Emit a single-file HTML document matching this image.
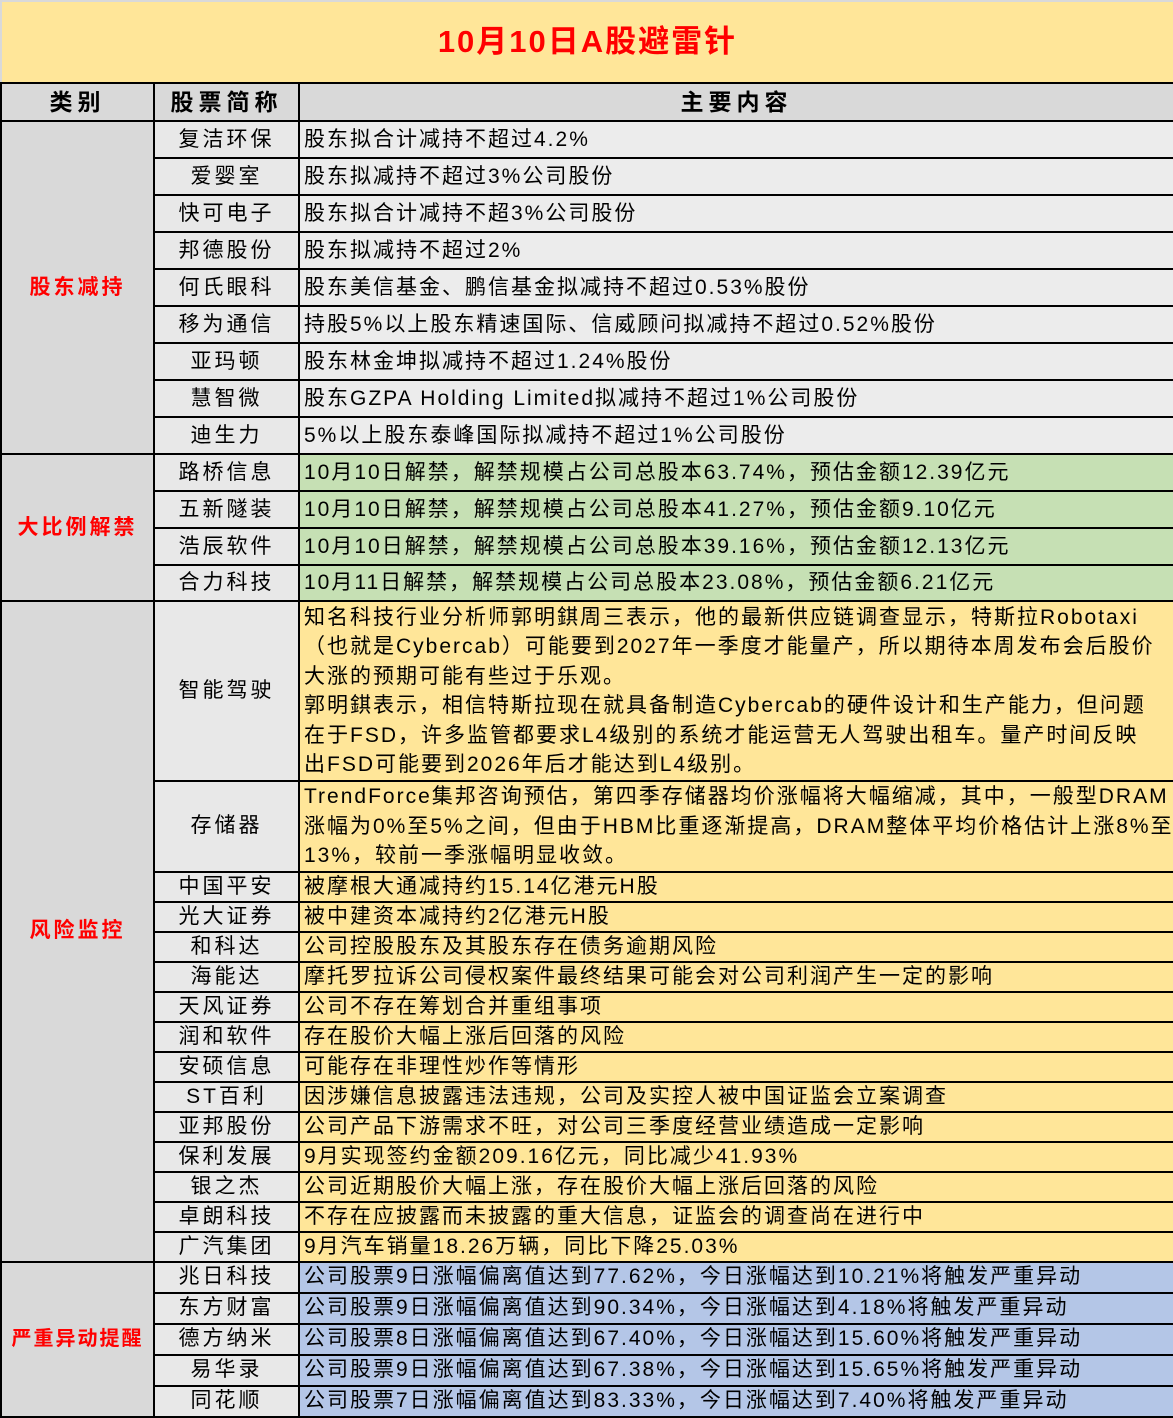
<!DOCTYPE html>
<html><head><meta charset="utf-8"><style>
body{margin:0;width:1173px;height:1416px;overflow:hidden;background:#fff;font-family:"Liberation Sans","Noto Sans CJK SC",sans-serif;}
table{border-collapse:collapse;table-layout:fixed;width:1173px;position:absolute;left:0;top:0;}
td{border:2px solid #000;padding:0;font-size:21px;line-height:24px;color:#000;white-space:nowrap;overflow:hidden;letter-spacing:2px;}
.t{background:#FFE699;color:#f00;font-weight:bold;font-size:31px;line-height:34px;letter-spacing:2px;text-align:center;border-color:#d9d9d9 #d9d9d9 #000 #d9d9d9;}
.h{background:#d9d9d9;font-weight:bold;font-size:23px;text-align:center;letter-spacing:5px;}
.c{background:#d9d9d9;color:#f00;font-weight:bold;font-size:21px;text-align:center;letter-spacing:3px;}
.n{background:#e8e8e8;text-align:center;letter-spacing:3px;}
.g{background:#ececec;padding-left:4px;}
.gr{background:#C6E0B4;padding-left:4px;}
.y{background:#FFE699;padding-left:4px;}
.b{background:#B4C6E7;padding-left:4px;}
.m{line-height:29.5px;vertical-align:middle;}
</style></head><body>
<table>
<colgroup><col style="width:153px"><col style="width:145px"><col style="width:875px"></colgroup>
<tr style="height:82px"><td class="t" colspan="3">10月10日A股避雷针</td></tr>
<tr style="height:38px"><td class="h">类别</td><td class="h">股票简称</td><td class="h">主要内容</td></tr>
<tr style="height:37px"><td class="c" rowspan="9">股东减持</td><td class="n">复洁环保</td><td class="g">股东拟合计减持不超过4.2%</td></tr>
<tr style="height:37px"><td class="n">爱婴室</td><td class="g">股东拟减持不超过3%公司股份</td></tr>
<tr style="height:37px"><td class="n">快可电子</td><td class="g">股东拟合计减持不超3%公司股份</td></tr>
<tr style="height:37px"><td class="n">邦德股份</td><td class="g">股东拟减持不超过2%</td></tr>
<tr style="height:37px"><td class="n">何氏眼科</td><td class="g">股东美信基金、鹏信基金拟减持不超过0.53%股份</td></tr>
<tr style="height:37px"><td class="n">移为通信</td><td class="g">持股5%以上股东精速国际、信威顾问拟减持不超过0.52%股份</td></tr>
<tr style="height:37px"><td class="n">亚玛顿</td><td class="g">股东林金坤拟减持不超过1.24%股份</td></tr>
<tr style="height:37px"><td class="n">慧智微</td><td class="g">股东GZPA Holding Limited拟减持不超过1%公司股份</td></tr>
<tr style="height:37px"><td class="n">迪生力</td><td class="g">5%以上股东泰峰国际拟减持不超过1%公司股份</td></tr>
<tr style="height:37px"><td class="c" rowspan="4">大比例解禁</td><td class="n">路桥信息</td><td class="gr">10月10日解禁，解禁规模占公司总股本63.74%，预估金额12.39亿元</td></tr>
<tr style="height:37px"><td class="n">五新隧装</td><td class="gr">10月10日解禁，解禁规模占公司总股本41.27%，预估金额9.10亿元</td></tr>
<tr style="height:37px"><td class="n">浩辰软件</td><td class="gr">10月10日解禁，解禁规模占公司总股本39.16%，预估金额12.13亿元</td></tr>
<tr style="height:36px"><td class="n">合力科技</td><td class="gr">10月11日解禁，解禁规模占公司总股本23.08%，预估金额6.21亿元</td></tr>
<tr style="height:180px"><td class="c" rowspan="15">风险监控</td><td class="n">智能驾驶</td><td class="y m">知名科技行业分析师郭明錤周三表示，他的最新供应链调查显示，特斯拉Robotaxi<br>（也就是Cybercab）可能要到2027年一季度才能量产，所以期待本周发布会后股价<br>大涨的预期可能有些过于乐观。<br>郭明錤表示，相信特斯拉现在就具备制造Cybercab的硬件设计和生产能力，但问题<br>在于FSD，许多监管都要求L4级别的系统才能运营无人驾驶出租车。量产时间反映<br>出FSD可能要到2026年后才能达到L4级别。</td></tr>
<tr style="height:90px"><td class="n">存储器</td><td class="y m">TrendForce集邦咨询预估，第四季存储器均价涨幅将大幅缩减，其中，一般型DRAM<br>涨幅为0%至5%之间，但由于HBM比重逐渐提高，DRAM整体平均价格估计上涨8%至<br>13%，较前一季涨幅明显收敛。</td></tr>
<tr style="height:30px"><td class="n">中国平安</td><td class="y">被摩根大通减持约15.14亿港元H股</td></tr>
<tr style="height:30px"><td class="n">光大证券</td><td class="y">被中建资本减持约2亿港元H股</td></tr>
<tr style="height:30px"><td class="n">和科达</td><td class="y">公司控股股东及其股东存在债务逾期风险</td></tr>
<tr style="height:30px"><td class="n">海能达</td><td class="y">摩托罗拉诉公司侵权案件最终结果可能会对公司利润产生一定的影响</td></tr>
<tr style="height:30px"><td class="n">天风证券</td><td class="y">公司不存在筹划合并重组事项</td></tr>
<tr style="height:30px"><td class="n">润和软件</td><td class="y">存在股价大幅上涨后回落的风险</td></tr>
<tr style="height:30px"><td class="n">安硕信息</td><td class="y">可能存在非理性炒作等情形</td></tr>
<tr style="height:30px"><td class="n">ST百利</td><td class="y">因涉嫌信息披露违法违规，公司及实控人被中国证监会立案调查</td></tr>
<tr style="height:30px"><td class="n">亚邦股份</td><td class="y">公司产品下游需求不旺，对公司三季度经营业绩造成一定影响</td></tr>
<tr style="height:30px"><td class="n">保利发展</td><td class="y">9月实现签约金额209.16亿元，同比减少41.93%</td></tr>
<tr style="height:30px"><td class="n">银之杰</td><td class="y">公司近期股价大幅上涨，存在股价大幅上涨后回落的风险</td></tr>
<tr style="height:30px"><td class="n">卓朗科技</td><td class="y">不存在应披露而未披露的重大信息，证监会的调查尚在进行中</td></tr>
<tr style="height:30px"><td class="n">广汽集团</td><td class="y">9月汽车销量18.26万辆，同比下降25.03%</td></tr>
<tr style="height:31px"><td class="c" rowspan="5" style="font-size:20px;letter-spacing:2px">严重异动提醒</td><td class="n">兆日科技</td><td class="b">公司股票9日涨幅偏离值达到77.62%，今日涨幅达到10.21%将触发严重异动</td></tr>
<tr style="height:31px"><td class="n">东方财富</td><td class="b">公司股票9日涨幅偏离值达到90.34%，今日涨幅达到4.18%将触发严重异动</td></tr>
<tr style="height:31px"><td class="n">德方纳米</td><td class="b">公司股票8日涨幅偏离值达到67.40%，今日涨幅达到15.60%将触发严重异动</td></tr>
<tr style="height:31px"><td class="n">易华录</td><td class="b">公司股票9日涨幅偏离值达到67.38%，今日涨幅达到15.65%将触发严重异动</td></tr>
<tr style="height:31px"><td class="n">同花顺</td><td class="b">公司股票7日涨幅偏离值达到83.33%，今日涨幅达到7.40%将触发严重异动</td></tr>
</table>
</body></html>
